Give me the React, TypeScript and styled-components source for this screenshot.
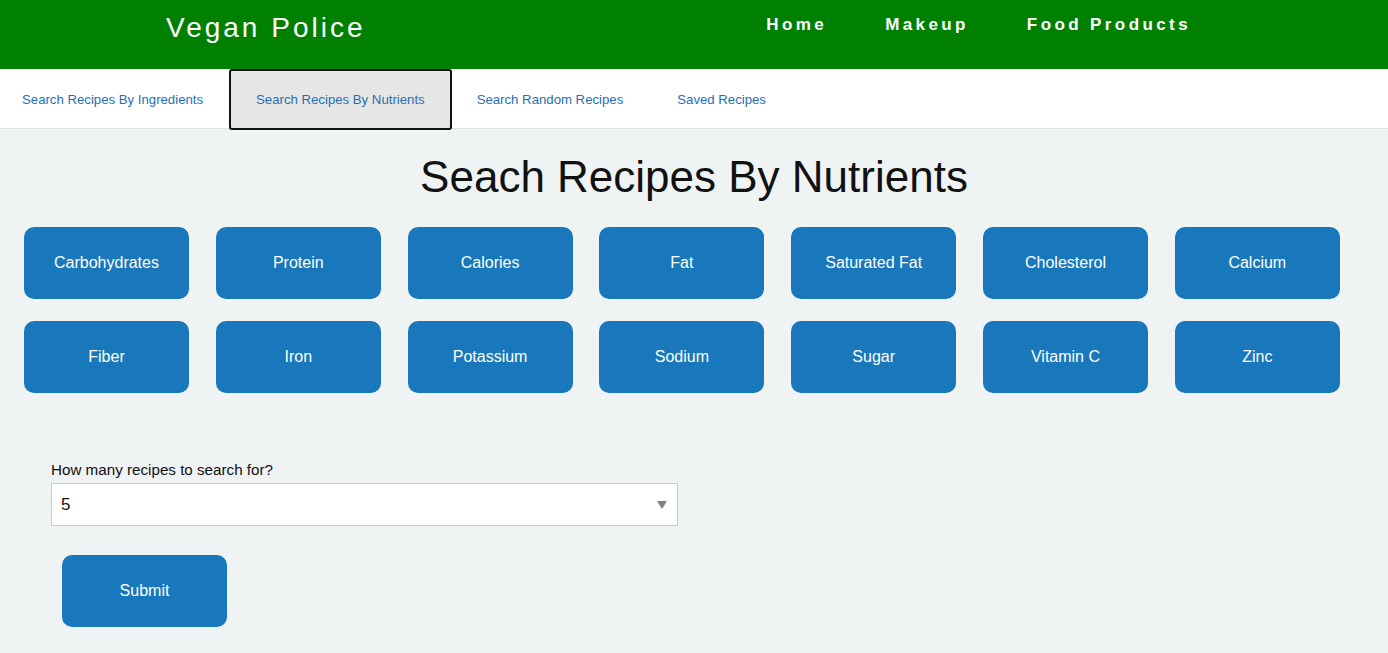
import styled, { createGlobalStyle } from "styled-components";

const GlobalStyle = createGlobalStyle`
  body {
    margin: 0;
    font-family: "Liberation Sans", Arial, sans-serif;
    background-color: #eff3f4;
  }
`;

const Header = styled.header`
  height: 69px;
  background-color: #008000;
  display: flex;
  justify-content: space-between;
  align-items: flex-start;
  padding: 0 197px 0 166px;
  box-sizing: border-box;
`;

const Brand = styled.div`
  color: #ffffff;
  font-size: 28px;
  letter-spacing: 3px;
  line-height: 32px;
  padding-top: 12px;
`;

const Nav = styled.nav`
  display: flex;
  gap: 58px;
  padding-top: 14px;
`;

const NavLink = styled.a`
  color: #ffffff;
  font-size: 17px;
  font-weight: 700;
  letter-spacing: 3.4px;
  line-height: 22px;
  text-decoration: none;
`;

const TabBar = styled.div`
  display: flex;
  height: 60px;
  background-color: #ffffff;
  border-bottom: 1px solid #e2e2e2;
  box-sizing: border-box;
`;

const Tab = styled.div<{ $active?: boolean }>`
  display: flex;
  align-items: center;
  padding: 0 25px;
  font-size: 13.2px;
  color: #1f6fb8;
  background-color: ${(p) => (p.$active ? "#e6e6e6" : "transparent")};
  border: 2px solid ${(p) => (p.$active ? "#111111" : "transparent")};
  border-radius: 3px;
  height: 61px;
  box-sizing: border-box;
  &:first-child {
    padding-left: 20px;
    padding-right: 24px;
  }
  &:nth-child(3) {
    padding-left: 23px;
  }
`;

const Main = styled.main`
  padding: 20px 0 26px;
`;

const Title = styled.h1`
  margin: 0 0 22px;
  text-align: center;
  font-size: 44px;
  font-weight: 400;
  line-height: 56px;
  color: #111111;
`;

const NutrientGrid = styled.div`
  display: grid;
  grid-template-columns: repeat(7, 165px);
  column-gap: 26.8px;
  row-gap: 22px;
  padding-left: 24px;
`;

const BlueButton = styled.button`
  width: 165px;
  height: 72px;
  border: none;
  border-radius: 10px;
  background-color: #1878bb;
  color: #ffffff;
  font-family: "Liberation Sans", Arial, sans-serif;
  font-size: 16px;
  cursor: pointer;
`;

const Form = styled.div`
  display: flex;
  flex-direction: column;
  align-items: flex-start;
  padding: 68px 0 0 51px;
`;

const Label = styled.label`
  font-size: 15.2px;
  color: #111111;
  line-height: 18px;
  margin-bottom: 4px;
`;

const SelectWrap = styled.div`
  position: relative;
  width: 627px;
`;

const Select = styled.select`
  width: 100%;
  height: 43px;
  appearance: none;
  border: 1px solid #c9c9c9;
  border-radius: 0;
  background-color: #ffffff;
  padding: 0 9px;
  font-family: "Liberation Sans", Arial, sans-serif;
  font-size: 17px;
  color: #111111;
  outline: none;
`;

const Arrow = styled.svg`
  position: absolute;
  right: 11px;
  top: 18px;
  pointer-events: none;
`;

const SubmitRow = styled.div`
  padding: 29px 0 0 11px;
`;

const nutrients = [
  "Carbohydrates",
  "Protein",
  "Calories",
  "Fat",
  "Saturated Fat",
  "Cholesterol",
  "Calcium",
  "Fiber",
  "Iron",
  "Potassium",
  "Sodium",
  "Sugar",
  "Vitamin C",
  "Zinc",
];

const tabs = [
  "Search Recipes By Ingredients",
  "Search Recipes By Nutrients",
  "Search Random Recipes",
  "Saved Recipes",
];

const App = () => {
  return (
    <>
      <GlobalStyle />
      <Header>
        <Brand>Vegan Police</Brand>
        <Nav>
          <NavLink href="#">Home</NavLink>
          <NavLink href="#">Makeup</NavLink>
          <NavLink href="#">Food Products</NavLink>
        </Nav>
      </Header>
      <TabBar>
        {tabs.map((t, i) => (
          <Tab key={t} $active={i === 1}>
            {t}
          </Tab>
        ))}
      </TabBar>
      <Main>
        <Title>Seach Recipes By Nutrients</Title>
        <NutrientGrid>
          {nutrients.map((n) => (
            <BlueButton key={n}>{n}</BlueButton>
          ))}
        </NutrientGrid>
        <Form>
          <Label>How many recipes to search for?</Label>
          <SelectWrap>
            <Select defaultValue="5">
              {[1, 2, 3, 4, 5, 6, 7, 8, 9, 10].map((n) => (
                <option key={n} value={n}>
                  {n}
                </option>
              ))}
            </Select>
            <Arrow width="10" height="8" viewBox="0 0 10 8">
              <path d="M0 0 H10 L5 8 Z" fill="#808080" />
            </Arrow>
          </SelectWrap>
          <SubmitRow>
            <BlueButton>Submit</BlueButton>
          </SubmitRow>
        </Form>
      </Main>
    </>
  );
};

export default App;
